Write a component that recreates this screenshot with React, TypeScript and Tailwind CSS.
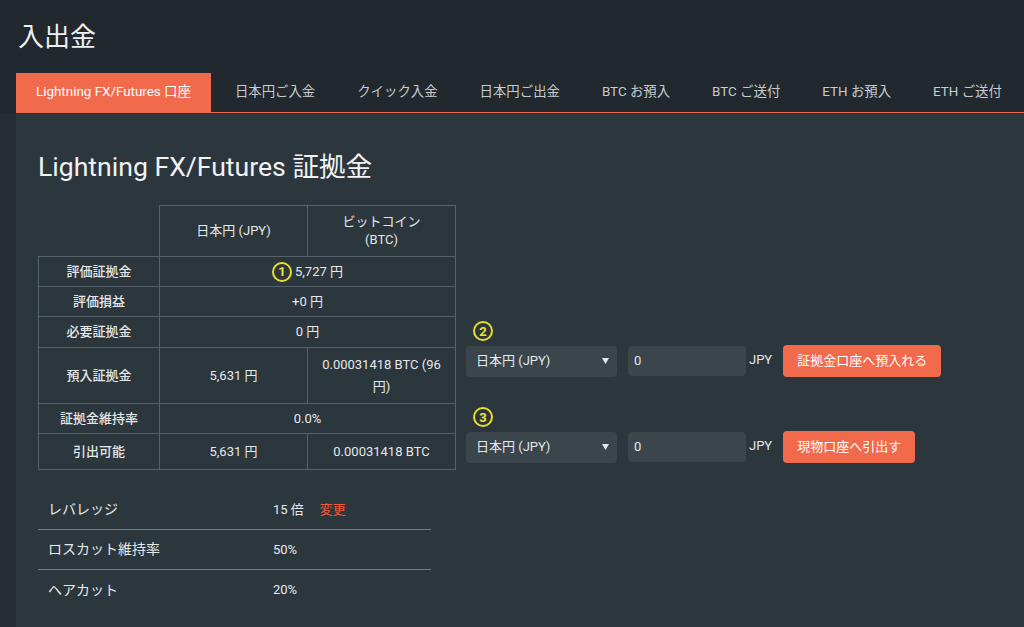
import React from "react";

const tabs = [
  "Lightning FX/Futures 口座",
  "日本円ご入金",
  "クイック入金",
  "日本円ご出金",
  "BTC お預入",
  "BTC ご送付",
  "ETH お預入",
  "ETH ご送付",
];

function Circled({ n }: { n: string }) {
  return (
    <span className="inline-flex items-center justify-center w-[20px] h-[20px] rounded-full border-2 border-[#e8df2a] text-[#efe62e] text-[13px] font-bold leading-none">
      {n}
    </span>
  );
}

function Select() {
  return (
    <div className="flex items-center justify-between w-[151px] h-[31px] bg-[#3a454c] rounded-sm pl-[10px] pr-[8px] text-[13px] text-[#e4e8ea]">
      <span>日本円 (JPY)</span>
      <svg width="7" height="6" viewBox="0 0 7 6">
        <path d="M0 0h7L3.5 6z" fill="#e4e8ea" />
      </svg>
    </div>
  );
}

function FormRow({ n, button }: { n: string; button: string }) {
  return (
    <div className="flex flex-col">
      <div className="pl-[7px] h-[24px] flex items-start">
        <Circled n={n} />
      </div>
      <div className="flex items-center">
        <Select />
        <div className="ml-[11px] w-[118px] h-[30px] bg-[#3a454c] rounded-sm pl-[6px] flex items-center text-[13px] text-[#e4e8ea]">
          0
        </div>
        <span className="ml-[3px] text-[13px] text-[#e4e8ea] -mt-[2px]">JPY</span>
        <button className="ml-[11px] h-[32px] px-[14px] bg-[#f26a4c] rounded-sm text-[13px] text-white">
          {button}
        </button>
      </div>
    </div>
  );
}

const cell = "border border-[#56626b] text-center align-middle";

export default function App() {
  return (
    <div className="min-h-[627px] bg-[#262e35] font-['Roboto','Noto_Sans_CJK_JP',sans-serif] text-[#e6e9eb]">
      {/* Header */}
      <div className="bg-[#21282e]">
        <h1 className="h-[73px] pl-[18px] pt-[19px] text-[26px] leading-[36px] text-[#eef1f2]">入出金</h1>
        <div className="ml-4 flex h-[40px] border-b border-[#e8694c]">
          {tabs.map((t, i) => (
            <div
              key={t}
              className={
                i === 0
                  ? "flex items-center px-[20px] bg-[#f26a4c] text-white text-[13.4px]"
                  : i === 1
                  ? "flex items-center ml-[3px] px-[21px] text-[#c6cbcf] text-[13.4px]"
                  : "flex items-center px-[21px] text-[#c6cbcf] text-[13.4px]"
              }
            >
              {t}
            </div>
          ))}
        </div>
      </div>

      {/* Panel */}
      <div className="ml-4 bg-[#2c363d] pl-[22px] pt-[38px] pb-[18px]">
        <h2 className="text-[26.6px] leading-[32px] text-[#f1f3f4]">Lightning FX/Futures 証拠金</h2>

        <div className="flex mt-[22px]">
          <table className="border-collapse text-[13px] text-[#e4e8ea]">
            <tbody>
              <tr className="h-[51px]">
                <td className="w-[121px]" />
                <td className={`${cell} w-[148px]`}>日本円 (JPY)</td>
                <td className={`${cell} w-[148px] leading-[18px]`}>
                  ビットコイン
                  <br />
                  (BTC)
                </td>
              </tr>
              <tr className="h-[30px]">
                <td className={`${cell} font-medium`}>評価証拠金</td>
                <td className={cell} colSpan={2}>
                  <span className="inline-flex items-center gap-[3px]">
                    <Circled n="1" />
                    5,727 円
                  </span>
                </td>
              </tr>
              <tr className="h-[30px]">
                <td className={`${cell} font-medium`}>評価損益</td>
                <td className={cell} colSpan={2}>+0 円</td>
              </tr>
              <tr className="h-[31px]">
                <td className={`${cell} font-medium`}>必要証拠金</td>
                <td className={cell} colSpan={2}>0 円</td>
              </tr>
              <tr className="h-[56px]">
                <td className={`${cell} font-medium`}>預入証拠金</td>
                <td className={cell}>5,631 円</td>
                <td className={`${cell} leading-[22px] px-[6px]`}>0.00031418 BTC (96 円)</td>
              </tr>
              <tr className="h-[30px]">
                <td className={`${cell} font-medium`}>証拠金維持率</td>
                <td className={cell} colSpan={2}>0.0%</td>
              </tr>
              <tr className="h-[36px]">
                <td className={`${cell} font-medium`}>引出可能</td>
                <td className={cell}>5,631 円</td>
                <td className={cell}>0.00031418 BTC</td>
              </tr>
            </tbody>
          </table>

          <div className="ml-[10px] mt-[116px] flex flex-col gap-[30px]">
            <FormRow n="2" button="証拠金口座へ預入れる" />
            <FormRow n="3" button="現物口座へ引出す" />
          </div>
        </div>

        {/* Settings list */}
        <div className="mt-[20px] w-[393px] text-[14px] text-[#e6e9eb]">
          {[
            { label: "レバレッジ", value: "15 倍", link: true },
            { label: "ロスカット維持率", value: "50%" },
            { label: "ヘアカット", value: "20%" },
          ].map((r, i) => (
            <div
              key={r.label}
              className={`flex items-center h-[40px] ${i < 2 ? "border-b border-[#707b83]" : ""}`}
            >
              <span className="w-[235px] pl-[10px]">{r.label}</span>
              <span className="text-[13px]">{r.value}</span>
              {r.link && <span className="ml-[16px] text-[13px] text-[#f05a3c]">変更</span>}
            </div>
          ))}
        </div>
      </div>
    </div>
  );
}
